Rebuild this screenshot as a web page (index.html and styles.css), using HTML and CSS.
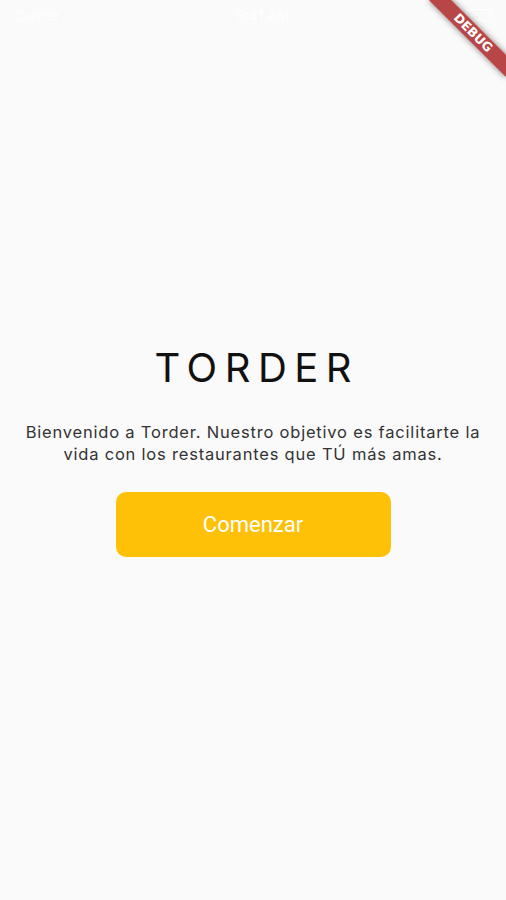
FILE: index.html
```html
<!DOCTYPE html>
<html lang="es">
<head>
<meta charset="utf-8">
<title>Torder</title>
<link rel="stylesheet" href="styles.css">
</head>
<body>
<div class="screen">
  <div class="status">
    <span class="carrier">Carrier</span>
    <span class="time">9:41 AM</span>
    <span class="battery"></span>
  </div>
  <main class="content">
    <h1 class="brand">TORDER</h1>
    <p class="intro">Bienvenido a Torder. Nuestro objetivo es facilitarte la vida con los restaurantes que TÚ más amas.</p>
    <button class="start">Comenzar</button>
  </main>
  <div class="debug">DEBUG</div>
</div>
</body>
</html>
```
FILE: styles.css
```css
html, body {
  margin: 0;
  padding: 0;
  background: #fafafa;
}
.screen {
  position: relative;
  width: 506px;
  height: 900px;
  overflow: hidden;
  font-family: Inter, Roboto, "Liberation Sans", sans-serif;
  display: flex;
  flex-direction: column;
}
.status {
  height: 30px;
  display: flex;
  align-items: center;
  justify-content: space-between;
  padding: 0 14px;
  color: rgba(255,255,255,0.9);
  font-size: 14px;
  flex: none;
  box-sizing: border-box;
}
.battery {
  width: 24px;
  height: 10px;
  border: 1px solid rgba(255,255,255,0.9);
  border-radius: 2px;
}
.content {
  flex: 1;
  display: flex;
  flex-direction: column;
  align-items: center;
  justify-content: center;
  padding-bottom: 30px;
}
.brand {
  margin: 0;
  font-weight: 400;
  font-size: 40px;
  line-height: 48px;
  letter-spacing: 7.5px;
  margin-right: -7.5px;
  color: #111;
}
.intro {
  margin: 29px 0 0;
  width: 474px;
  text-align: center;
  font-size: 16.5px;
  line-height: 22px;
  letter-spacing: 0.8px;
  color: #333;
}
.start {
  margin-top: 27px;
  width: 275px;
  height: 65px;
  border: none;
  border-radius: 10px;
  background: #ffc107;
  color: #fff;
  font-family: Roboto, "Liberation Sans", sans-serif;
  font-size: 22px;
}
.debug {
  position: absolute;
  left: 419px;
  top: 25px;
  width: 108px;
  height: 16px;
  transform: rotate(45deg);
  background: rgba(170, 30, 30, 0.82);
  box-shadow: 0 0 6px rgba(0,0,0,0.5);
  color: #fff;
  font-family: "DejaVu Sans", sans-serif;
  font-weight: 900;
  font-size: 12.5px;
  line-height: 16px;
  text-align: center;
}
```
